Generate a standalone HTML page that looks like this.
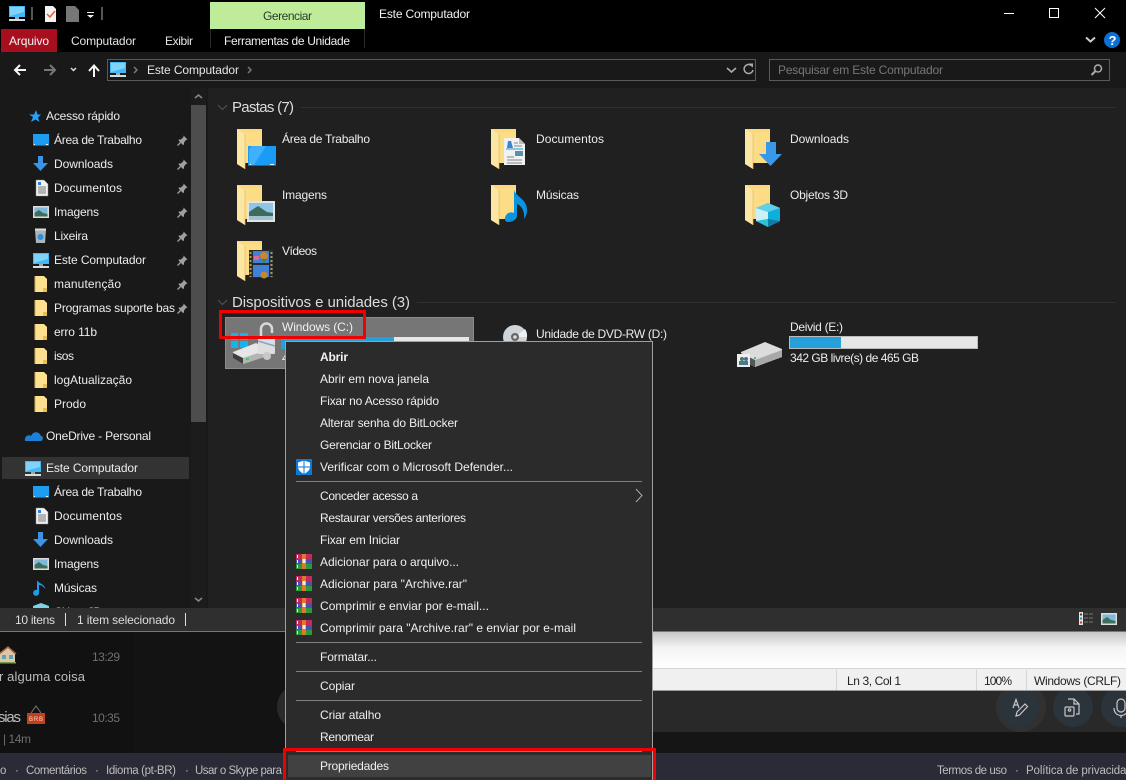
<!DOCTYPE html>
<html lang="pt-BR"><head><meta charset="utf-8"><title>Este Computador</title>
<style>
html,body{margin:0;padding:0;background:#111;width:1126px;height:780px;overflow:hidden}
svg{display:block;position:absolute;left:0;top:0}
text{font-family:"Liberation Sans",sans-serif;font-size:12px;fill:#ececec}
.m text,text.m{fill:#efefef}
text.d{fill:#bdbdbd;font-size:11.5px}
</style></head><body>
<svg width="1126" height="780" viewBox="0 0 1126 780" xmlns="http://www.w3.org/2000/svg">
<defs>
<linearGradient id="sh" x1="0" y1="0" x2="0" y2="1"><stop offset="0" stop-color="#c4c4c4"/><stop offset=".45" stop-color="#f4f4f4"/><stop offset="1" stop-color="#fff"/></linearGradient>
<g id="fo"><path d="M0 0H25V34H8V40L0 35Z" fill="#fbd87c"/><path d="M8 3H25V34H8Z" fill="#fcdc85"/><path d="M0 0L8 5V40L0 35Z" fill="#fbe6a4"/><path d="M8 5V40" stroke="#e3bb63" stroke-width=".7"/></g>
<g id="sf"><path d="M0 0H9L12 3V16H0Z" fill="#fde18e"/><path d="M12 12V16H8V12Z" fill="#e9bd58"/><path d="M0 0V16" stroke="#d9ae55"/></g>
<g id="pc"><rect x="0" y="0" width="16" height="11" fill="#43b8f5"/><path d="M1 1H15V6L1 10Z" fill="#7fd3fb"/><rect x="6" y="11" width="4" height="2" fill="#9aa"/><rect x="0" y="13" width="16" height="2" fill="#d9dde0"/></g>
<g id="desk"><rect x="0" y="0" width="16" height="12" fill="#1e9cf0"/><rect x="0" y="11" width="16" height="1" fill="#0c67b8"/><rect x="1" y="10" width="1" height="1" fill="#fff"/><rect x="13" y="10" width="2" height="1" fill="#fff"/></g>
<g id="dl"><path d="M5 0H10V7H15L7.500 15L0 7H5Z" fill="#3b93e4"/></g>
<g id="doc"><path d="M0 0H8L12 4V16H0Z" fill="#f2f2f2" stroke="#888" stroke-width=".5"/><path d="M2 2H5V5H2Z" fill="#2d7fd0"/><path d="M2 7H10M2 9H10M2 11H10M2 13H10" stroke="#777"/></g>
<g id="img"><rect x="0" y="0" width="16" height="12" fill="#dcdcdc"/><rect x="1.500" y="1.500" width="13" height="9" fill="#7fb9da"/><path d="M1.500 7L6 4L10 7L14.500 8V10.500H1.500Z" fill="#3f6d5c"/></g>
<g id="pin"><path d="M6.500 .5L10.500 4.500L9 5L7 7.500L7 9.500L6 10L1.500 5.500L2 4.500L4 4.500L6.500 2Z" fill="#a0a0a0"/><path d="M3.500 7.500L.5 10.500" stroke="#a0a0a0" stroke-width="1.300"/></g>
<g id="war"><rect x="0" y="0" width="16" height="5" fill="#c22c5b"/><rect x="0" y="5" width="16" height="5" fill="#4f4fb0"/><rect x="0" y="10" width="16" height="5" fill="#2a9a3c"/><rect x="6" y="0" width="4" height="15" fill="#e0782a"/><rect x="6.500" y="5" width="3" height="4" fill="#f4f0e0"/><rect x="1" y="1" width="1" height="3" fill="#fff"/><rect x="1" y="6" width="1" height="3" fill="#fff"/><rect x="1" y="11" width="1" height="3" fill="#ff6"/></g>
</defs>

<!-- background layers -->
<rect width="1126" height="780" fill="#111"/>
<rect x="133" y="632" width="153" height="121" fill="#131313"/>
<rect x="653" y="691" width="473" height="41" fill="#292929"/>
<rect x="653" y="732" width="473" height="21" fill="#151515"/>
<rect x="0" y="753" width="1126" height="27" fill="#2a2b36"/>
<circle cx="300" cy="707" r="23" fill="#2a2a2a"/>
<circle cx="1021" cy="707" r="25" fill="#313131"/>
<circle cx="1019" cy="707" r="20" fill="#2b333b"/>
<circle cx="1073" cy="707" r="20" fill="#2b333b"/>
<circle cx="1121" cy="707" r="20" fill="#2b333b"/>
<rect x="653" y="631" width="473" height="37" fill="url(#sh)"/>
<rect x="653" y="668" width="473" height="23" fill="#f0f0f0"/>
<rect x="653" y="668" width="473" height="1" fill="#d4d4d4"/>
<rect x="653" y="690" width="473" height="1" fill="#9a9a9a"/>
<!-- bottom icons -->
<g fill="none" stroke="#c8c8c8" stroke-width="1.200">
<path d="M1017 712L1025 704L1027.500 706.500L1019.500 715L1016 716Z"/><path d="M1013 708L1016 699.500L1019 708M1014 705H1018"/>
<path d="M1068 699H1074L1079 704V714H1076M1074 699V704H1079"/><rect x="1065" y="707" width="9" height="9" rx="1"/><circle cx="1069.500" cy="710" r="1.200"/>
<rect x="1117" y="699" width="8" height="13" rx="4"/><path d="M1114 708C1114 718 1128 718 1128 708M1121 715V718"/>
</g>
<!-- bottom texts -->
<text x="-1" y="681" style="font-size:13px;fill:#bdbdbd" textLength="86">r alguma coisa</text>
<text x="92" y="661" style="fill:#6f6f6f" textLength="28">13:29</text>
<text x="-2" y="722" style="font-size:15px;fill:#bdbdbd" textLength="23">sias</text>
<text x="92" y="722" style="fill:#6f6f6f" textLength="28">10:35</text>
<text x="3" y="743" style="fill:#6f6f6f" textLength="28">| 14m</text>
<g><path d="M0 654L8 647L15 654V663H0Z" fill="#d9c7a8"/><path d="M-1 654L8 647L16 654" fill="none" stroke="#a5603d" stroke-width="1.500"/><rect x="2" y="655" width="4" height="4" fill="#5fa3b5"/><rect x="9" y="655" width="4" height="4" fill="#5fa3b5"/><rect x="0" y="662" width="16" height="1.500" fill="#7c9a4d"/></g>
<g><path d="M31 713L36 706L41 713" fill="none" stroke="#777"/><rect x="27" y="713" width="18" height="11" fill="#c2401c"/><text x="29" y="721" style="font-size:6px;fill:#f0d8c8" textLength="14">BRB</text></g>
<text x="0" y="774" class="d" textLength="6">o</text><text x="15" y="774" class="d">·</text>
<text x="26" y="774" class="d" textLength="61">Comentários</text><text x="95" y="774" class="d">·</text>
<text x="106" y="774" class="d" textLength="70">Idioma (pt-BR)</text><text x="185" y="774" class="d">·</text>
<text x="195" y="774" class="d" textLength="87">Usar o Skype para</text>
<text x="937" y="774" class="d" textLength="70">Termos de uso</text><text x="1015" y="774" class="d">·</text>
<text x="1026" y="774" class="d" textLength="113">Política de privacidade</text>
<rect x="836" y="670" width="1" height="20" fill="#d4d4d4"/><rect x="976" y="670" width="1" height="20" fill="#d4d4d4"/><rect x="1026" y="670" width="1" height="20" fill="#d4d4d4"/>
<text x="847" y="685" style="fill:#222" textLength="54">Ln 3, Col 1</text>
<text x="984" y="685" style="fill:#222" textLength="28">100%</text>
<text x="1034" y="685" style="fill:#222" textLength="87">Windows (CRLF)</text>

<!-- window -->
<rect x="0" y="0" width="1126" height="632" fill="#191919"/>
<rect x="0" y="0" width="1126" height="52" fill="#000"/>
<rect x="0" y="631" width="1126" height="1" fill="#777"/>
<!-- title bar -->
<use href="#pc" x="9" y="6"/>
<rect x="31" y="7" width="2" height="13" fill="#555"/>
<path d="M45 6H53L56 9V22H45Z" fill="#f3f3f3"/><path d="M47 14L50 17L55 11" fill="none" stroke="#e2642a" stroke-width="1.500"/>
<path d="M66 6H75L79 10V22H66Z" fill="#777"/>
<rect x="87" y="12" width="7" height="1" fill="#eee"/><path d="M87 15H94L90.500 18Z" fill="#eee"/>
<rect x="101" y="7" width="2" height="13" fill="#555"/>
<rect x="210" y="2" width="155" height="27" fill="#bfec99"/>
<text x="263" y="20" style="fill:#2c3a2c" textLength="49">Gerenciar</text>
<text x="379" y="18" textLength="91" style="fill:#f2f2f2">Este Computador</text>
<rect x="1004" y="13" width="10" height="1" fill="#fff"/>
<rect x="1049.500" y="8.500" width="9" height="9" fill="none" stroke="#fff"/>
<path d="M1095 8L1105 18M1105 8L1095 18" stroke="#fff" stroke-width="1"/>
<!-- tabs -->
<rect x="1" y="29" width="56" height="23" fill="#a80f1e"/>
<text x="9" y="45" style="fill:#f5f5f5" textLength="40">Arquivo</text>
<text x="71" y="45" style="fill:#e4e4e4" textLength="65">Computador</text>
<text x="165" y="45" style="fill:#e4e4e4" textLength="28">Exibir</text>
<text x="224" y="45" style="fill:#efefef" textLength="126">Ferramentas de Unidade</text>
<rect x="210" y="29" width="1" height="19" fill="#2a2a2a"/><rect x="364" y="29" width="1" height="19" fill="#2a2a2a"/>
<path d="M1086 37.500L1090.500 41.500L1095 37.500" fill="none" stroke="#ccc" stroke-width="2"/>
<circle cx="1112" cy="40" r="8" fill="#0b6fd4"/>
<text x="1108.500" y="45" style="font-size:13px;font-weight:bold;fill:#fff">?</text>

<!-- nav bar -->
<g fill="none" stroke-width="2">
<path d="M26 70H15.500M20 65L15 70L20 75" stroke="#f5f5f5"/>
<path d="M44 70H55M50 65L55 70L50 75" stroke="#777"/>
<path d="M71 68L73.500 70.500L76 68" stroke="#ddd" stroke-width="1.500"/>
<path d="M94 77V66M89 71L94 65.500L99 71" stroke="#f5f5f5"/>
</g>
<rect x="107.500" y="59.500" width="648" height="21" fill="#191919" stroke="#5a5a5a"/>
<use href="#pc" x="110" y="62"/>
<path d="M134 67L137 70L134 73M248 67L251 70L248 73" fill="none" stroke="#777" stroke-width="1.500"/>
<text x="147" y="74" textLength="92" style="fill:#e6e6e6">Este Computador</text>
<path d="M727 68L731.500 72L736 68" fill="none" stroke="#aaa" stroke-width="1.600"/>
<path d="M753 66A4.500 4.500 0 1 0 754 70" transform="translate(-1 0)" fill="none" stroke="#aaa" stroke-width="1.500"/><path d="M748 63.500H753V67.500Z" fill="#aaa"/>
<rect x="769.500" y="59.500" width="340" height="21" fill="#191919" stroke="#5a5a5a"/>
<text x="778" y="74" textLength="165" style="fill:#777">Pesquisar em Este Computador</text>
<circle cx="1098" cy="68.500" r="3.500" fill="none" stroke="#aaa" stroke-width="1.500"/><path d="M1095.500 71L1091.500 75" stroke="#aaa" stroke-width="2"/>

<!-- panes -->
<rect x="208" y="88" width="918" height="520" fill="#202020"/>
<rect x="191" y="88" width="15" height="520" fill="#1c1c1c"/>
<rect x="191" y="105" width="15" height="317" fill="#4d4d4d"/>
<path d="M195 98L198.500 95L202 98" fill="none" stroke="#888" stroke-width="1.500"/>
<path d="M195 598L198.500 601L202 598" fill="none" stroke="#888" stroke-width="1.500"/>

<!-- sidebar -->
<rect x="2" y="457" width="187" height="22" fill="#333"/>
<path d="M36 110L37.500 114.500H41L38 117.500L39.500 122L35.500 119.500L31 122L33 117L29 114.500H34Z" fill="#2aa0f0"/>
<text x="46" y="120" textLength="74">Acesso rápido</text>
<use href="#desk" x="33" y="134"/><text x="54" y="144" textLength="88">Área de Trabalho</text>
<use href="#dl" x="33" y="156"/><text x="54" y="168" textLength="59">Downloads</text>
<use href="#doc" x="36" y="180"/><text x="54" y="192" textLength="68">Documentos</text>
<use href="#img" x="33" y="206"/><text x="54" y="216" textLength="45">Imagens</text>
<path d="M35 230H46L45 243H36Z" fill="#aab4ba"/><circle cx="40.500" cy="237" r="3" fill="#2a8fd6"/><rect x="35" y="228.500" width="11" height="2" fill="#ddd"/>
<text x="54" y="240" textLength="34">Lixeira</text>
<use href="#pc" x="33" y="253"/><text x="54" y="264" textLength="92">Este Computador</text>
<use href="#sf" x="35" y="276"/><text x="54" y="288" textLength="67">manutenção</text>
<use href="#sf" x="35" y="300"/><text x="54" y="312" textLength="121">Programas suporte bas</text>
<use href="#sf" x="35" y="324"/><text x="54" y="336" textLength="43">erro 11b</text>
<use href="#sf" x="35" y="348"/><text x="54" y="360" textLength="20">isos</text>
<use href="#sf" x="35" y="372"/><text x="54" y="384" textLength="78">logAtualização</text>
<use href="#sf" x="35" y="396"/><text x="54" y="408" textLength="32">Prodo</text>
<g><use href="#pin" x="177" y="135"/><use href="#pin" x="177" y="159"/><use href="#pin" x="177" y="183"/><use href="#pin" x="177" y="207"/><use href="#pin" x="177" y="231"/><use href="#pin" x="177" y="255"/><use href="#pin" x="177" y="279"/><use href="#pin" x="177" y="303"/></g>
<path d="M25 441C24 436 29 434 31 436C33 431 39 431 41 436C44 436 43 441 41 441Z" fill="#1f7fd6"/>
<text x="46" y="440" textLength="105">OneDrive - Personal</text>
<use href="#pc" x="25" y="461"/><text x="46" y="472" textLength="92">Este Computador</text>
<use href="#desk" x="33" y="486"/><text x="54" y="496" textLength="88">Área de Trabalho</text>
<use href="#doc" x="36" y="508"/><text x="54" y="520" textLength="68">Documentos</text>
<use href="#dl" x="33" y="532"/><text x="54" y="544" textLength="59">Downloads</text>
<use href="#img" x="33" y="558"/><text x="54" y="568" textLength="45">Imagens</text>
<path d="M39 580V592A3 3 0 1 1 37 590V580C39 584 45 584 45 589C43 586 41 585 39 585Z" fill="#1d9be8"/>
<text x="54" y="592" textLength="43">Músicas</text>
<path d="M33 606L41 603L49 606V608H33Z" fill="#7fd3e8"/><text x="54" y="616" textLength="48">Objetos 3D</text>

<!-- content -->
<path d="M218 105L222.500 109.500L227 105" fill="none" stroke="#555" stroke-width="1"/>
<text x="232" y="112" style="font-size:15px;fill:#dcdcdc" textLength="62">Pastas (7)</text>
<rect x="301" y="107" width="815" height="1" fill="#2f2f2f"/>
<use href="#fo" x="237" y="129"/><use href="#fo" x="491" y="129"/><use href="#fo" x="745" y="129"/>
<use href="#fo" x="237" y="185"/><use href="#fo" x="491" y="185"/><use href="#fo" x="745" y="185"/>
<use href="#fo" x="237" y="241"/>
<!-- overlays -->
<rect x="248" y="146" width="28" height="20" fill="#1a9bf5"/><path d="M252 146H266L254 165H249V150Z" fill="#3fb0fb"/><rect x="248" y="165" width="28" height="1" fill="#0c6ab8"/><rect x="250" y="164" width="1" height="1" fill="#fff"/><rect x="270" y="164" width="4" height="1" fill="#fff"/>
<path d="M504 138H519L525 144V165H504Z" fill="#f1f1f1"/><path d="M519 138V144H525Z" fill="#bbb"/><path d="M508 141L511 141L513 148H507Z" fill="#3a85d0"/><path d="M514 143H518M514 146H522M507 157H514M507 160H522M507 163H522" stroke="#888"/><rect x="515" y="151" width="8" height="5" fill="#5a93a8"/><path d="M506 149H523" stroke="#1d9bd8"/>
<path d="M766 142H776V154H782L770.500 166L759 154H766Z" fill="#3a98ea"/>
<rect x="247" y="201" width="28" height="21" fill="#e4e4e4"/><rect x="249" y="203" width="24" height="17" fill="#8fc5e6"/><path d="M249 212L258 206L267 212L273 213V220H249Z" fill="#3c6c5b"/><rect x="249" y="216" width="24" height="4" fill="#9fc3cf"/>
<path d="M514 190C516 197 527 199 527 210C527 214 525.500 217 524 219C525 212 522 206 517 204L517 215C517 220 512 222 508 222C504 222 504 217 507 214C509 212 512 212 514 213Z" fill="#0a93e0"/>
<path d="M756 208L768 203L780 208V221L768 227L756 221Z" fill="#10aedb"/><path d="M756 208L768 203L780 208L768 212Z" fill="#5fd0e8"/><path d="M756 208L768 212V219L756 221Z" fill="#cdeff6"/><path d="M768 219L756 221L768 227Z" fill="#2bc3d8"/><path d="M768 219V227L780 221Z" fill="#0b7fa8"/>
<rect x="249" y="250" width="24" height="28" fill="#2a2a2a"/><rect x="253" y="251" width="16" height="12" fill="#3f80d8"/><rect x="253" y="265" width="16" height="12" fill="#3f80d8"/><circle cx="264" cy="256" r="4" fill="#c9862a"/><path d="M261 259L264 263L267 259Z" fill="#3a8a3a"/><circle cx="264" cy="275" r="3.500" fill="#c9862a"/><rect x="254" y="256" width="5" height="4" fill="#d96a9a"/><path d="M250.500 252V277M271.500 252V277" stroke="#a89a60" stroke-dasharray="2 2" stroke-width="2"/>
<text x="282" y="143" textLength="88">Área de Trabalho</text>
<text x="536" y="143" textLength="68">Documentos</text>
<text x="790" y="143" textLength="59">Downloads</text>
<text x="282" y="199" textLength="45">Imagens</text>
<text x="536" y="199" textLength="43">Músicas</text>
<text x="790" y="199" textLength="58">Objetos 3D</text>
<text x="282" y="255" textLength="35">Vídeos</text>

<path d="M218 300L222.500 304.500L227 300" fill="none" stroke="#555" stroke-width="1"/>
<text x="232" y="307" style="font-size:15px;fill:#dcdcdc" textLength="178">Dispositivos e unidades (3)</text>
<rect x="417" y="302" width="699" height="1" fill="#2f2f2f"/>
<!-- C: -->
<rect x="225.500" y="317.500" width="248" height="51" fill="#767676" stroke="#8c8c8c"/>
<text x="282" y="331" style="fill:#f0f0f0" textLength="71">Windows (C:)</text>
<rect x="281" y="337" width="188" height="12" fill="#e6e6e6"/><rect x="281" y="337" width="113" height="12" fill="#26a0da"/>
<text x="282" y="362" style="fill:#eee">4</text>
<g><path d="M231 333H238V340H231ZM240 333H248V340H240ZM231 341H238V348H231ZM240 341H248V348H240Z" fill="#17b3ef"/>
<path d="M233 352L256 343L267 349V356L243 364L233 358Z" fill="#e6e6e6"/><path d="M233 353L243 358V364L233 358Z" fill="#3e3e3e"/><path d="M243 358L267 350V356L243 364Z" fill="#b4b4b4"/><rect x="246" y="358" width="3" height="2" fill="#3fd060"/>
<path d="M261 337V329A5.500 5.500 0 0 1 272 329V333" fill="none" stroke="#d8d8d8" stroke-width="2.500"/><rect x="258" y="337" width="17" height="17" rx="1" fill="#dedede"/><path d="M258 341L275 346" stroke="#7ea9c8" stroke-width="1.500"/><circle cx="267" cy="356" r="4" fill="#c8c8c8"/></g>
<!-- D: -->
<circle cx="515" cy="337" r="12" fill="#cfd4d8"/><path d="M515 337L525 329A12 12 0 0 1 527 337Z" fill="#eef0f2"/><circle cx="515" cy="337" r="4" fill="#666"/><circle cx="515" cy="337" r="1.800" fill="#ddd"/>
<text x="536" y="338" textLength="131">Unidade de DVD-RW (D:)</text>
<!-- E: -->
<text x="790" y="331" textLength="53">Deivid (E:)</text>
<rect x="789.500" y="336.500" width="188" height="12" fill="#e6e6e6" stroke="#bcbcbc"/><rect x="790" y="337" width="51" height="11" fill="#26a0da"/>
<text x="790" y="362" textLength="129">342 GB livre(s) de 465 GB</text>
<path d="M741 352L765 342L782 349V357L755 367L741 360Z" fill="#dcdcdc"/><path d="M741 353L755 360V367L741 360Z" fill="#555"/><path d="M755 360L782 350V357L755 367Z" fill="#a9a9a9"/><rect x="754" y="357" width="2" height="2" fill="#30d060"/>
<rect x="737" y="354" width="13" height="13" fill="#eee"/><circle cx="742" cy="359" r="2" fill="#4a7a5a"/><circle cx="746" cy="359" r="2" fill="#3f6ea0"/><rect x="739" y="361" width="9" height="4" fill="#4a7a8a"/>

<!-- status bar -->
<rect x="0" y="608" width="1126" height="23" fill="#2f2f2f"/>
<text x="15" y="624" textLength="40" style="fill:#dedede">10 itens</text>
<rect x="65" y="613" width="1" height="13" fill="#ddd"/>
<text x="77" y="624" textLength="98" style="fill:#dedede">1 item selecionado</text>
<rect x="185" y="613" width="1" height="13" fill="#ddd"/>
<rect x="1079" y="612" width="4" height="13" fill="#e6e6e6"/><rect x="1080" y="613.500" width="2" height="2" fill="#444"/><rect x="1080" y="617.500" width="2" height="2" fill="#2a7fc8"/><rect x="1080" y="621.500" width="2" height="2" fill="#d03030"/>
<path d="M1084 614H1094M1084 618H1094M1084 622H1094" stroke="#777" stroke-dasharray="4 1"/>
<use href="#img" x="1101" y="613"/>

<!-- context menu -->
<rect x="285.500" y="341.500" width="367" height="440" fill="#2b2b2b" stroke="#a0a0a0"/>
<rect x="288" y="755" width="363" height="22" fill="#414141"/>
<rect x="296" y="481" width="346" height="1" fill="#808080"/>
<rect x="296" y="642" width="346" height="1" fill="#808080"/>
<rect x="296" y="671" width="346" height="1" fill="#808080"/>
<rect x="296" y="700" width="346" height="1" fill="#808080"/>
<rect x="296" y="751" width="346" height="1" fill="#808080"/>
<text x="320" y="361" style="font-weight:bold;fill:#f2f2f2" textLength="28">Abrir</text>
<g class="m">
<text x="320" y="383" textLength="109">Abrir em nova janela</text>
<text x="320" y="405" textLength="119">Fixar no Acesso rápido</text>
<text x="320" y="427" textLength="138">Alterar senha do BitLocker</text>
<text x="320" y="449" textLength="112">Gerenciar o BitLocker</text>
<text x="320" y="471" textLength="193">Verificar com o Microsoft Defender...</text>
<text x="320" y="500" textLength="98">Conceder acesso a</text>
<text x="320" y="522" textLength="146">Restaurar versões anteriores</text>
<text x="320" y="544" textLength="80">Fixar em Iniciar</text>
<text x="320" y="566" textLength="139">Adicionar para o arquivo...</text>
<text x="320" y="588" textLength="147">Adicionar para "Archive.rar"</text>
<text x="320" y="610" textLength="169">Comprimir e enviar por e-mail...</text>
<text x="320" y="632" textLength="256">Comprimir para "Archive.rar" e enviar por e-mail</text>
<text x="320" y="661" textLength="57">Formatar...</text>
<text x="320" y="690" textLength="35">Copiar</text>
<text x="320" y="719" textLength="61">Criar atalho</text>
<text x="320" y="741" textLength="54">Renomear</text>
<text x="320" y="770" textLength="69">Propriedades</text>
</g>
<rect x="296" y="459" width="16" height="16" fill="#0f78d4"/><path d="M304 460.500L310 462.500V467C310 470 307 472.500 304 474C301 472.500 298 470 298 467V462.500Z" fill="#fff"/><path d="M304 460.500V474M298 467H310" stroke="#0f78d4"/>
<path d="M636 489L642 495.500L636 502" fill="none" stroke="#aaa" stroke-width="1"/>
<use href="#war" x="296" y="554"/><use href="#war" x="296" y="576"/><use href="#war" x="296" y="598"/><use href="#war" x="296" y="620"/>

<!-- red highlights -->
<rect x="220.500" y="311.500" width="144" height="26" fill="none" stroke="#f00000" stroke-width="3"/>
<rect x="284.500" y="749.500" width="370" height="32" fill="none" stroke="#f00000" stroke-width="3"/>
</svg>
</body></html>
